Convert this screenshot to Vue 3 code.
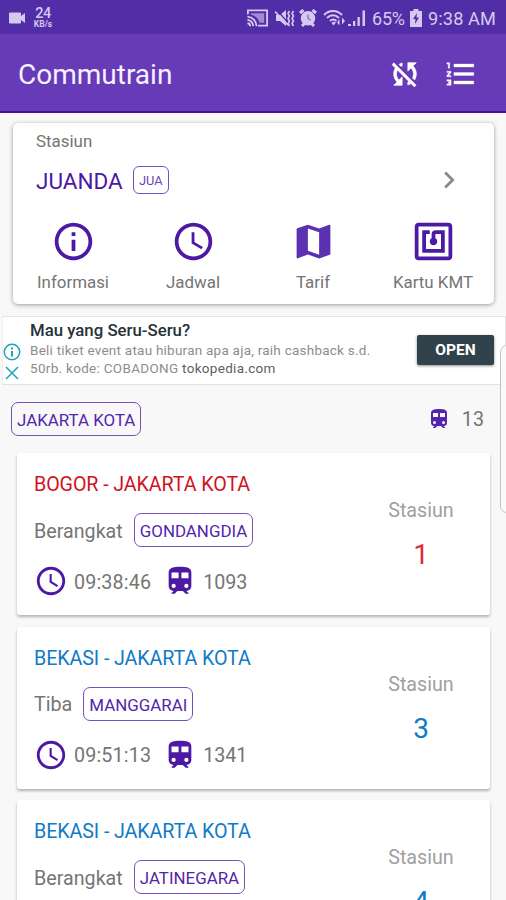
<script setup>
const icons = {
  info: 'M11 7h2v2h-2zm0 4h2v6h-2zm1-9C6.48 2 2 6.48 2 12s4.48 10 10 10 10-4.48 10-10S17.52 2 12 2zm0 18c-4.41 0-8-3.59-8-8s3.59-8 8-8 8 3.59 8 8-3.59 8-8 8z',
  clock: 'M11.99 2C6.47 2 2 6.48 2 12s4.47 10 9.99 10C17.52 22 22 17.52 22 12S17.52 2 11.99 2zM12 20c-4.42 0-8-3.58-8-8s3.58-8 8-8 8 3.58 8 8-3.58 8-8 8zm.5-13H11v6l5.25 3.15.75-1.23-4.5-2.67z',
  map: 'M20.5 3l-.16.03L15 5.1 9 3 3.36 4.9c-.21.07-.36.25-.36.48V20.5c0 .28.22.5.5.5l.16-.03L9 18.9l6 2.1 5.64-1.9c.21-.07.36-.25.36-.48V3.5c0-.28-.22-.5-.5-.5zM15 19l-6-2.11V5l6 2.11V19z',
  nfc: 'M20 2H4c-1.100 0-2 .9-2 2v16c0 1.100.9 2 2 2h16c1.100 0 2-.9 2-2V4c0-1.100-.9-2-2-2zm0 18H4V4h16v16zM18 6h-5c-1.100 0-2 .9-2 2v2.280c-.6.350-1 .980-1 1.720 0 1.100.9 2 2 2s2-.9 2-2c0-.740-.4-1.380-1-1.720V8h3v8H8V8h2V6H6v12h12V6z',
  train: 'M12 2C8 2 4 2.500 4 6v9.500A3.500 3.500 0 0 0 7.500 19L6 20.500v.5h2.230l2-2H14l2 2h2v-.5L16.500 19a3.500 3.500 0 0 0 3.500-3.500V6c0-3.500-3.580-4-8-4zM7.500 17A1.500 1.500 0 1 1 9 15.500 1.500 1.500 0 0 1 7.500 17zM11 10H6V6h5zm2 0V6h5v4zm3.500 7a1.500 1.500 0 1 1 1.500-1.500 1.500 1.500 0 0 1-1.500 1.500z',
}

const menu = [
  { icon: 'info', label: 'Informasi' },
  { icon: 'clock', label: 'Jadwal' },
  { icon: 'map', label: 'Tarif' },
  { icon: 'nfc', label: 'Kartu KMT' },
]

const trains = [
  { route: 'BOGOR - JAKARTA KOTA', line: 'red', status: 'Berangkat', at: 'GONDANGDIA', time: '09:38:46', no: '1093', left: 1 },
  { route: 'BEKASI - JAKARTA KOTA', line: 'blue', status: 'Tiba', at: 'MANGGARAI', time: '09:51:13', no: '1341', left: 3 },
  { route: 'BEKASI - JAKARTA KOTA', line: 'blue', status: 'Berangkat', at: 'JATINEGARA', left: 4 },
]
</script>

<template>
  <div class="screen">
    <div class="status">
      <svg class="cam" viewBox="0 0 16 12"><path d="M1 .5h10a1 1 0 0 1 1 1V4l4-3v10l-4-3v2.500a1 1 0 0 1-1 1H1a1 1 0 0 1-1-1v-9a1 1 0 0 1 1-1z" /></svg>
      <div class="speed"><b>24</b><span>KB/s</span></div>
      <div class="tray">
        <svg class="cast" viewBox="0 0 24 20"><path d="M2 6V2h20v16H12.500" fill="none" stroke="currentColor" stroke-width="1.900" /><path d="M5 5h14v10h-5C13 10 9 7 5 6.500z" opacity=".6" /><path d="M1.500 8.500A10 10 0 0 1 11 18.500M1.500 12A7 7 0 0 1 7.500 18.500M1.500 15.500A3 3 0 0 1 4.300 18.500" fill="none" stroke="currentColor" stroke-width="1.900" /></svg>
        <svg class="mute" viewBox="0 0 20 18"><path d="M1 6h4l6-5v16l-6-5H1z" /><path d="M2 1l12 14" stroke="#512da8" stroke-width="1.200" /><path d="M0 2.500l13 13.500" stroke="currentColor" stroke-width="1.600" /><path d="M14.500 2l-1.500 2.500L14.500 7 13 9.500l1.500 2.500-1.500 2.500 1.500 2.500M18.500 2L17 4.500 18.500 7 17 9.500l1.500 2.500-1.500 2.500 1.500 2.500" fill="none" stroke="currentColor" stroke-width="1.600" /></svg>
        <svg class="alarm" viewBox="0 0 18 18"><circle cx="9" cy="9.300" r="7.200" /><path d="M1 4l3.500-3M17 4l-3.500-3M3 17l2.500-2.500M15 17l-2.500-2.500" stroke="currentColor" stroke-width="3" /><path d="M9 5.500v4l2.800 1.700" fill="none" stroke="#8266c4" stroke-width="1.300" /></svg>
        <svg class="wifi" viewBox="0 0 23 18"><path d="M1 6C6 .6 14 .6 19 6M4 9c3.500-3.600 8.500-3.600 12 0M7 12c2-2 4.500-2 6.500 0" fill="none" stroke="currentColor" stroke-width="1.900" /><path d="M8.500 14l2-1.500 2.500 1-2.500 3z" /><path d="M16.500 10v6.500l-2.500-3zM19 8.500l3 3.500-3 3.500z" /></svg>
        <svg class="signal" viewBox="0 0 18 18"><path d="M0 15h3v2H0zM5 12h2.300v5H5zM9.500 8h2.300v9H9.500zM14.500 1.500h2.500V17h-2.500z" /></svg>
        <span class="pct">65%</span>
        <svg class="batt" viewBox="0 0 12 18"><path d="M3.500 0h5v2H12v16H0V2h3.500z" /><path d="M7 4L3 10h2.500L5 15l4-6.500H6.500z" fill="#512da8" /></svg>
        <span class="now">9:38 AM</span>
      </div>
    </div>

    <header class="bar">
      <h1>Commutrain</h1>
      <svg class="act" viewBox="0 0 24 24"><path d="M10 6.350V4.260c-.8.210-1.550.540-2.230.960l1.460 1.460c.25-.120.500-.240.770-.330zm-7.140-.940l2.360 2.360C4.450 8.990 4 10.440 4 12c0 2.210.910 4.200 2.360 5.640L4 20h6v-6l-2.240 2.240C6.680 15.150 6 13.660 6 12c0-1 .25-1.940.680-2.770l8.080 8.080c-.25.130-.5.250-.770.340v2.090c.8-.210 1.550-.540 2.230-.960l2.360 2.360 1.270-1.270L4.140 4.140 2.860 5.410zM20 4h-6v6l2.240-2.240C17.320 8.850 18 10.340 18 12c0 1-.25 1.940-.680 2.770l1.460 1.460C19.550 15.010 20 13.560 20 12c0-2.210-.910-4.200-2.360-5.640L20 4z" stroke="currentColor" stroke-width=".45" /></svg>
      <svg class="act" viewBox="0 0 24 24"><path d="M2 17h2v.5H3v1h1v.5H2v1h3v-4H2v1zm1-9h1V4H2v1h1v3zm-1 3h1.800L2 13.100v.9h3v-1H3.200L5 10.900V10H2v1zm5-6v2h14V5H7zm0 14h14v-2H7v2zm0-6h14v-2H7v2z" stroke="currentColor" stroke-width=".25" /></svg>
    </header>

    <section class="station">
      <div class="caption">Stasiun</div>
      <div class="name">
        <span>JUANDA</span>
        <em>JUA</em>
        <svg viewBox="0 0 24 24"><path d="M10 6L8.590 7.410 13.170 12l-4.580 4.590L10 18l6-6z" /></svg>
      </div>
      <nav>
        <div v-for="m in menu" :key="m.label" class="item">
          <svg :class="m.icon" viewBox="0 0 24 24"><path :d="icons[m.icon]" /></svg>
          <span>{{ m.label }}</span>
        </div>
      </nav>
    </section>

    <section class="ad">
      <div class="marks">
        <svg viewBox="0 0 18 18"><circle cx="9" cy="9" r="7.700" /><path d="M9 8v5.500M9 4.500v2" stroke-width="2" /></svg>
        <svg viewBox="0 0 18 18"><path d="M3 3l12 12M15 3L3 15" /></svg>
      </div>
      <div class="copy">
        <strong>Mau yang Seru-Seru?</strong>
        <p class="l1">Beli tiket event atau hiburan apa aja, raih cashback s.d.</p>
        <p class="l2">50rb. kode: COBADONG <span>tokopedia.com</span></p>
      </div>
      <button>OPEN</button>
    </section>

    <div class="dest">
      <span class="chip">JAKARTA KOTA</span>
      <svg viewBox="0 0 24 24"><path :d="icons.train" /></svg>
      <span class="count">13</span>
    </div>

    <main>
      <article v-for="(t, i) in trains" :key="i">
        <div class="trip">
          <h2 :class="t.line">{{ t.route }}</h2>
          <div class="where"><span class="state">{{ t.status }}</span><span class="chip">{{ t.at }}</span></div>
          <div v-if="t.time" class="when">
            <svg viewBox="0 0 24 24"><path :d="icons.clock" /></svg>
            <span class="time">{{ t.time }}</span>
            <svg viewBox="0 0 24 24"><path :d="icons.train" /></svg>
            <span>{{ t.no }}</span>
          </div>
        </div>
        <div class="left">
          <span>Stasiun</span>
          <b :class="t.line">{{ t.left }}</b>
        </div>
      </article>
    </main>

    <div class="handle"></div>
  </div>
</template>

<style>
body { margin: 0; overflow: hidden; }
</style>

<style scoped>
* { box-sizing: border-box; }
.screen { position: relative; width: 506px; height: 900px; overflow: hidden; background: #f8f8f8; font-family: Roboto, "Liberation Sans", sans-serif; color: #757575; display: flex; flex-direction: column; }
svg { display: block; fill: currentColor; flex: none; }
h1, h2, p { margin: 0; font-weight: 400; }

.status { height: 34px; flex: none; background: #512da8; color: #d6c9ee; display: flex; align-items: center; padding: 2px 9px 0 9px; }
.cam { width: 16px; height: 12px; }
.speed { width: 22px; margin-left: 7px; display: flex; flex-direction: column; align-items: center; }
.speed b { font-size: 14.500px; line-height: 13px; font-weight: 500; letter-spacing: -0.500px; }
.speed span { font-size: 8.500px; line-height: 9px; font-weight: 700; }
.tray { margin-left: auto; display: flex; align-items: center; }
.cast { width: 23px; height: 20px; }
.mute { width: 20px; height: 18px; margin-left: 6px; }
.alarm { width: 18px; height: 18px; margin-left: 4px; }
.wifi { width: 23px; height: 18px; margin-left: 6px; }
.signal { width: 18px; height: 18px; margin-left: 2px; }
.pct { width: 34px; margin-left: 6px; font-size: 18px; letter-spacing: -0.200px; white-space: nowrap; }
.batt { width: 12px; height: 18px; margin-left: 4px; }
.now { margin-left: 6px; width: 69px; font-size: 18.200px; letter-spacing: .1px; white-space: nowrap; }

.bar { height: 79px; flex: none; background: #673ab7; border-bottom: 2px solid #4a0da0; color: #fff; display: flex; align-items: center; padding: 4px 28px 0 18px; }
.bar h1 { flex: 1; font-size: 28px; line-height: 34px; color: #f6f0ff; }
.act { width: 34px; height: 34px; margin-top: -1px; }
.act + .act { margin-left: 22px; }

.station { flex: none; margin: 10px 12px 0 13px; height: 181px; background: #fff; border-radius: 5px; box-shadow: 0 1px 4px rgba(0, 0, 0, .38); display: flex; flex-direction: column; }
.caption { padding: 8px 0 0 23px; font-size: 16.900px; line-height: 20px; }
.name { height: 30px; margin-top: 14px; padding: 0 28px 0 23px; display: flex; align-items: center; color: #4c18a4; }
.name span { font-size: 22.500px; line-height: 30px; padding-top: 1px; }
.name em { font-style: normal; margin-left: 10px; width: 36px; height: 28px; border: 1.500px solid #7650bd; border-radius: 6px; font-size: 12.800px; line-height: 27px; text-align: center; color: #6a41b8; }
.name svg { width: 34px; height: 34px; margin-left: auto; color: #8a8a8a; }
.station nav { display: flex; margin-top: 24px; }
.item { width: 120px; display: flex; flex-direction: column; align-items: center; font-size: 16.900px; }
.item svg { width: 45px; height: 45px; color: #4c18a4; }
.item svg.map { color: #5b30b2; }
.item span { margin-top: 8px; line-height: 21px; }

.ad { flex: none; height: 69px; margin: 12px 0 0 2px; background: #fff; border: 1px solid #e2e2e2; border-left-color: #eee; display: flex; padding-right: 11px; }
.marks { width: 20px; padding-top: 26px; display: flex; flex-direction: column; gap: 3px; color: #1aa5b8; }
.marks svg { width: 18px; height: 18px; fill: none; stroke: currentColor; stroke-width: 1.500; }
.copy { flex: 1; padding: 3px 0 0 7px; white-space: nowrap; }
.copy strong { display: block; font-size: 16.800px; line-height: 21px; font-weight: 500; color: #263238; }
.copy p { font-size: 13.500px; line-height: 18px; color: #8d8d8d; letter-spacing: .24px; }
.copy p.l2 { letter-spacing: .3px; }
.copy p span { color: #606060; }
.ad button { width: 77px; height: 30px; margin-top: 18px; padding: 0; border: 0; border-radius: 2px; background: #32424c; box-shadow: 0 1px 3px rgba(0, 0, 0, .45); color: #fff; font: 700 15.500px/27px Roboto, sans-serif; }

.dest { flex: none; height: 68px; padding: 0 22px 0 11px; display: flex; align-items: center; }
.chip { height: 34px; padding: 0 5px; border: 1.500px solid #7650bd; border-radius: 7px; font-size: 16.900px; line-height: 34px; color: #5425ab; white-space: nowrap; }
.dest svg { width: 24px; height: 24px; margin: 0 11px 0 auto; color: #5425ab; }
.count { font-size: 19.700px; line-height: 24px; padding-top: 2px; }

main { flex: none; padding: 0 16px 0 17px; display: flex; flex-direction: column; gap: 11.500px; }
article { height: 162px; background: #fff; border-radius: 3px; box-shadow: 0 2px 3px rgba(0, 0, 0, .28); display: flex; padding: 20px 0 0 17px; }
.trip { flex: 1; }
h2 { font-size: 19.700px; line-height: 24px; letter-spacing: -0.100px; white-space: nowrap; }
.red { color: #d0131f; }
.blue { color: #0f7bc8; }
.where { display: flex; align-items: center; gap: 11px; margin-top: 16px; height: 34px; }
.state { font-size: 19.700px; line-height: 24px; padding-top: 3px; }
.when { display: flex; align-items: center; margin-top: 17px; height: 34px; font-size: 19.700px; line-height: 24px; }
.when svg { width: 34px; height: 34px; color: #4c18a4; }
.when span { padding-top: 3px; }
.when .time { margin: 0 12px 0 6px; letter-spacing: .15px; }
.when svg + span { margin-left: 6px; }
.left { width: 138px; display: flex; flex-direction: column; align-items: center; padding-top: 26px; }
.left span { font-size: 19.700px; line-height: 24px; color: #a0a0a0; }
.left b { font-size: 28px; line-height: 34px; font-weight: 400; margin-top: 15px; }
.left .red { color: #dd2c35; }

.handle { position: absolute; left: 500px; top: 345px; width: 20px; height: 168px; background: #fafafa; border: 1.500px solid #c4c4c4; border-radius: 7px; }
</style>
